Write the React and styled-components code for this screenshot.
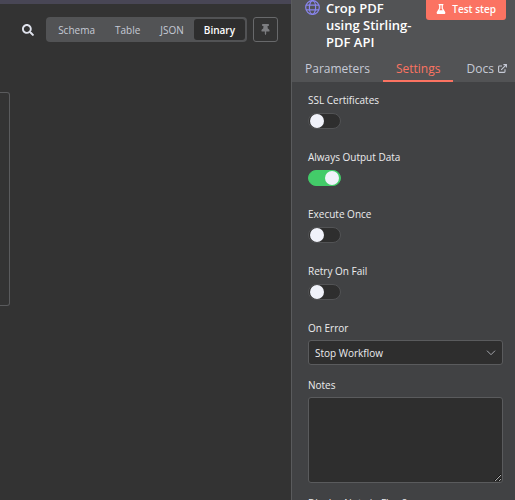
import React, { useState } from 'react';
import styled, { createGlobalStyle } from 'styled-components'
import { FaSearch, FaThumbtack, FaFlask } from 'react-icons/fa'


const GlobalStyle = createGlobalStyle`
  * {
    box-sizing: border-box;
  }
  body {
    margin: 0;
    background: #333333;
    color: #ececee;
    font-family: "Open Sans", "Noto Sans", sans-serif;
    font-size: 10px;
    line-height: 16px;
  }
  button, select, textarea {
    font: inherit;
    color: inherit;
    margin: 0;
  }
`

const Page = styled.div`
  display: flex;
  height: 100vh;
  overflow: hidden;
`

const OutputPane = styled.main`
  flex: 1;
  min-width: 0;
  border-top: 4px solid #484655;
  background: #333333;
`

const Toolbar = styled.div`
  display: flex;
  justify-content: flex-end;
  align-items: center;
  padding: 13px 13px 0 0;
`

const IconButton = styled.button`
  display: flex;
  padding: 0;
  margin-right: 12px;
  border: none;
  background: none;
  color: #dfe2ec;
  font-size: 12px;
  cursor: pointer;
`

const ViewSwitch = styled.div`
  display: flex;
  height: 25px;
  padding: 2px;
  border-radius: 4px;
  background: #525355;
`

const ViewButton = styled.button`
  padding: 0 10px;
  border: none;
  border-radius: 3px;
  background: ${props => props.$active ? "#2e2e2e" : "none"};
  color: ${props => props.$active ? "#ffffff" : "#c6cad6"};
  font-weight: ${props => props.$active ? 600 : 500};
  line-height: 20px;
  cursor: pointer;
`

const PinButton = styled.button`
  display: flex;
  align-items: center;
  justify-content: center;
  width: 25px;
  height: 25px;
  padding: 0;
  margin-left: 6px;
  border: 1px solid #68696b;
  border-radius: 3px;
  background: #333333;
  color: #7c7d80;
  font-size: 11px;
`

const BinaryCard = styled.section`
  width: 10px;
  height: 214px;
  margin-top: 50px;
  border: 1px solid #5a5b5d;
  border-left: none;
  border-radius: 0 3px 3px 0;
`

const NodePane = styled.aside`
  flex: none;
  width: 224px;
  overflow: hidden;
  border-left: 1px solid #5a5b5d;
  background: #414244;
`

const NodeHeader = styled.header`
  background: #525355;
`

const TitleRow = styled.div`
  display: flex;
  align-items: flex-start;
  padding: 0 9px 0 13px;
`

const Title = styled.h1`
  flex: 1;
  margin: 0 10px 0 6px;
  color: #ffffff;
  font-size: 13px;
  font-weight: 600;
  line-height: 17px;
`

const TestButton = styled.button`
  display: flex;
  align-items: center;
  justify-content: center;
  gap: 6px;
  flex: none;
  height: 20px;
  padding: 0 10px 2px;
  border: none;
  border-radius: 0 0 3px 3px;
  background: #fb7362;
  color: #ffffff;
  font-weight: 600;
  cursor: pointer;
`

const Tabs = styled.nav`
  display: flex;
  margin-top: 7px;
`

const Tab = styled.a`
  display: flex;
  align-items: center;
  gap: 4px;
  flex: none;
  height: 24px;
  padding: 0 13px 1px;
  border-bottom: 2px solid ${props => props.$active ? "#fb7362" : "transparent"};
  color: ${props => props.$active ? "#fb7362" : "#c6cad6"};
  font-size: 12px;
  font-weight: 500;
  text-decoration: none;
`

const Settings = styled.form`
  display: flex;
  flex-direction: column;
  gap: 12px;
  padding: 10px 12px 0 16px;
`

const Field = styled.div`
  display: flex;
  flex-direction: column;
  gap: 4px;
`

const Label = styled.label`
  font-size: 10px;
`

const Switch = styled.input`
  appearance: none;
  display: flex;
  align-items: center;
  justify-content: ${props => props.checked ? "flex-end" : "flex-start"};
  width: 33px;
  height: 16px;
  margin: 1px 0 8px;
  padding: 0 1px;
  border: 1px solid ${props => props.checked ? "#43cc69" : "#525355"};
  border-radius: 8px;
  background: ${props => props.checked ? "#43cc69" : "#2e2e2e"};
  cursor: pointer;

  &::before {
    content: "";
    width: 14px;
    height: 14px;
    border-radius: 50%;
    background: #f0f2fa;
  }
`

const SelectBox = styled.div`
  display: grid;
  align-items: center;

  & > * {
    grid-area: 1 / 1;
  }
  svg {
    justify-self: end;
    margin-right: 7px;
    pointer-events: none;
  }
`

const Select = styled.select`
  appearance: none;
  width: 100%;
  height: 25px;
  padding: 0 6px;
  border: 1px solid #5a5b5d;
  border-radius: 3px;
  background: #2e2e2e;
`

const NotesInput = styled.textarea`
  display: block;
  width: 100%;
  height: 86px;
  border: 1px solid #5a5b5d;
  border-radius: 3px;
  background: #2e2e2e;
  color-scheme: dark;
  resize: vertical;
`


const GlobeIcon = () => (
  <svg width="15" height="16" viewBox="0 0 15 16" fill="none" stroke="#8985ee" strokeWidth="1.2" aria-hidden="true">
    <circle cx="7.5" cy="7.5" r="6.8" />
    <ellipse cx="7.5" cy="7.5" rx="3.1" ry="6.8" />
    <path d="M1 5.2h13M1 9.8h13" />
  </svg>
)

const ExternalIcon = () => (
  <svg width="9" height="9" viewBox="0 0 9 9" fill="none" stroke="currentColor" strokeWidth="1.1" aria-hidden="true">
    <path d="M4 2H1.4Q.6 2 .6 2.8v4.8q0 .8.8.8h4.8q.8 0 .8-.8V5.2" />
    <path d="M5.4.6h3v3M8.2.8L3.2 5.8" />
  </svg>
)

const ChevronIcon = () => (
  <svg width="10" height="6" viewBox="0 0 10 6" fill="none" stroke="#a4a6ac" aria-hidden="true">
    <path d="M1 .7l4 4 4-4" />
  </svg>
)


const views = ["Schema", "Table", "JSON", "Binary"]

const toggles = [
  {id: "ssl", label: "SSL Certificates"},
  {id: "always", label: "Always Output Data"},
  {id: "once", label: "Execute Once"},
  {id: "retry", label: "Retry On Fail"}
]


export default function App(){
  const [view, setView] = useState("Binary")
  const [values, setValues] = useState({always: true})
  const toggle = id => setValues(v => ({...v, [id]: !v[id]}))

  return (
    <Page>
      <GlobalStyle />
      <OutputPane>
        <Toolbar>
          <IconButton aria-label="Search"><FaSearch /></IconButton>
          <ViewSwitch>
            {views.map(name => (
              <ViewButton key={name} $active={name === view} onClick={() => setView(name)}>{name}</ViewButton>
            ))}
          </ViewSwitch>
          <PinButton aria-label="Pin data"><FaThumbtack /></PinButton>
        </Toolbar>
        <BinaryCard />
      </OutputPane>
      <NodePane>
        <NodeHeader>
          <TitleRow>
            <GlobeIcon />
            <Title>Crop PDF using Stirling-PDF API</Title>
            <TestButton><FaFlask size={10} />Test step</TestButton>
          </TitleRow>
          <Tabs>
            <Tab href="#parameters">Parameters</Tab>
            <Tab href="#settings" $active>Settings</Tab>
            <Tab href="#docs">Docs <ExternalIcon /></Tab>
          </Tabs>
        </NodeHeader>
        <Settings>
          {toggles.map(t => (
            <Field key={t.id}>
              <Label htmlFor={t.id}>{t.label}</Label>
              <Switch type="checkbox" id={t.id} checked={!!values[t.id]} onChange={() => toggle(t.id)} />
            </Field>
          ))}
          <Field>
            <Label htmlFor="onError">On Error</Label>
            <SelectBox>
              <Select id="onError"><option>Stop Workflow</option></Select>
              <ChevronIcon />
            </SelectBox>
          </Field>
          <Field>
            <Label htmlFor="notes">Notes</Label>
            <NotesInput id="notes" />
          </Field>
          <Field>
            <Label htmlFor="noteInFlow">Display Note in Flow?</Label>
            <Switch type="checkbox" id="noteInFlow" checked={!!values.noteInFlow} onChange={() => toggle("noteInFlow")} />
          </Field>
        </Settings>
      </NodePane>
    </Page>
  )
}
